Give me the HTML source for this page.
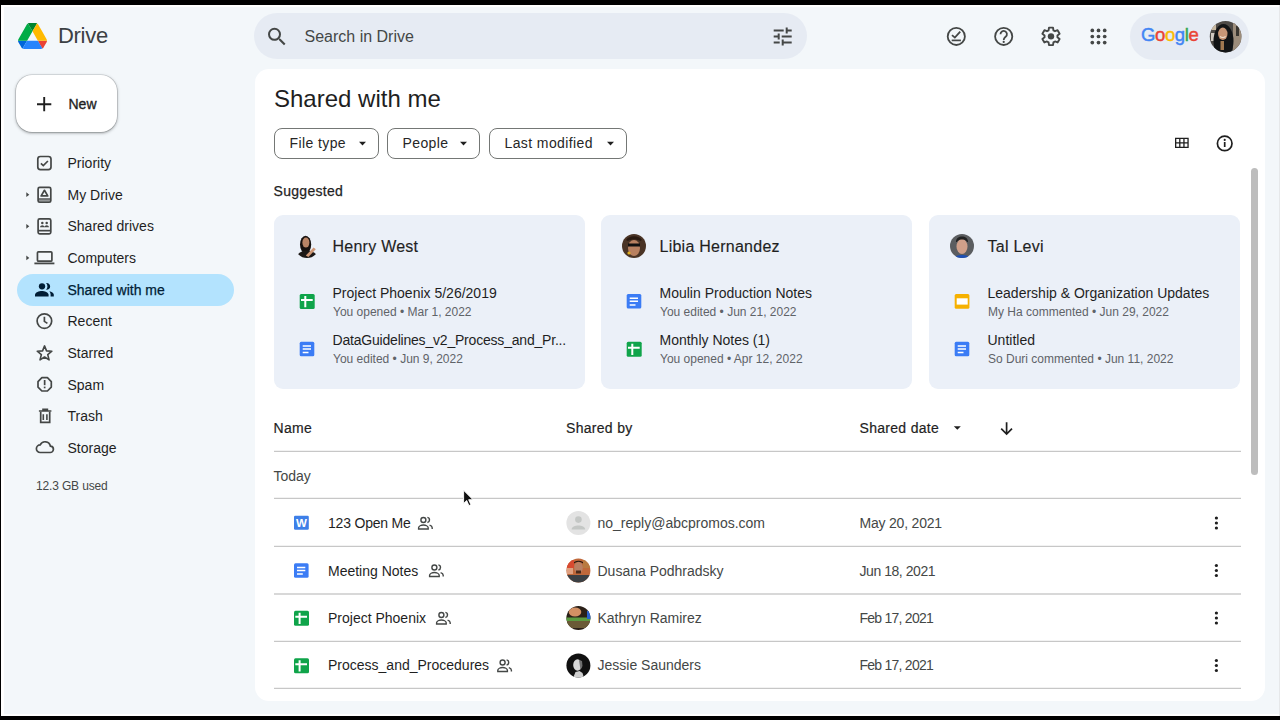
<!DOCTYPE html>
<html><head><meta charset="utf-8">
<style>
*{margin:0;padding:0;box-sizing:border-box}
html,body{width:1280px;height:720px;overflow:hidden;background:#000}
body{font-family:"Liberation Sans",sans-serif;color:#1f1f1f;position:relative}
.a{position:absolute}
.t{position:absolute;white-space:nowrap;line-height:1}
#ov{position:absolute;left:0;top:0}
</style></head><body>
<div class="a" style="left:1px;top:5px;width:1278px;height:711px;background:#f3f7fa"></div>
<div class="a" style="left:1px;top:5px;width:1278px;height:2px;background:#fff"></div>
<div class="a" style="left:1px;top:5px;width:3px;height:711px;background:#fff"></div>
<div class="a" style="left:1px;top:714px;width:1278px;height:2px;background:#fff"></div>
<div class="t" style="left:58px;top:25.00px;font-size:22px;color:#3c4043;letter-spacing:-0.3px">Drive</div>
<div class="a" style="left:254px;top:13px;width:553px;height:46px;background:#e6ebf3;border-radius:23px"></div>
<div class="t" style="left:304.5px;top:29.00px;font-size:16px;color:#444746;">Search in Drive</div>
<div class="a" style="left:1130px;top:13px;width:119px;height:47px;background:#e6ebf3;border-radius:24px"></div>
<div class="t" style="left:1141px;top:26.04px;font-size:18.5px;letter-spacing:-0.4px;-webkit-text-stroke:0.45px currentColor"><span style="color:#4285f4">G</span><span style="color:#ea4335">o</span><span style="color:#fbbc05">o</span><span style="color:#4285f4">g</span><span style="color:#34a853">l</span><span style="color:#ea4335">e</span></div>
<div class="a" style="left:16px;top:75px;width:101px;height:57px;background:#fff;border-radius:16px;box-shadow:0 0 0 0.6px rgba(60,64,67,.22),0 1px 2px rgba(60,64,67,.35),0 1px 3px 1px rgba(60,64,67,.18)"></div>
<div class="t" style="left:68.5px;top:97.00px;font-size:14px;color:#1f1f1f;-webkit-text-stroke:0.35px #1f1f1f">New</div>
<div class="a" style="left:17px;top:274px;width:217px;height:32px;background:#b3e3fe;border-radius:16px"></div>
<div class="t" style="left:67.5px;top:156.00px;font-size:14px;color:#1f1f1f;">Priority</div>
<div class="t" style="left:67.5px;top:188.00px;font-size:14px;color:#1f1f1f;">My Drive</div>
<div class="t" style="left:67.5px;top:219.00px;font-size:14px;color:#1f1f1f;">Shared drives</div>
<div class="t" style="left:67.5px;top:251.00px;font-size:14px;color:#1f1f1f;">Computers</div>
<div class="t" style="left:67.5px;top:283.00px;font-size:14px;color:#001d35;-webkit-text-stroke:0.25px #001d35">Shared with me</div>
<div class="t" style="left:67.5px;top:314.00px;font-size:14px;color:#1f1f1f;">Recent</div>
<div class="t" style="left:67.5px;top:346.00px;font-size:14px;color:#1f1f1f;">Starred</div>
<div class="t" style="left:67.5px;top:378.00px;font-size:14px;color:#1f1f1f;">Spam</div>
<div class="t" style="left:67.5px;top:409.00px;font-size:14px;color:#1f1f1f;">Trash</div>
<div class="t" style="left:67.5px;top:441.00px;font-size:14px;color:#1f1f1f;">Storage</div>
<div class="t" style="left:36px;top:480.00px;font-size:12px;color:#444746;letter-spacing:-0.15px">12.3 GB used</div>
<div class="a" style="left:255px;top:69px;width:1010px;height:632px;background:#fff;border-radius:14px"></div>
<div class="t" style="left:274px;top:87.00px;font-size:24px;color:#1f1f1f;">Shared with me</div>
<div class="a" style="left:274px;top:128px;width:105px;height:31px;border:1px solid #747775;border-radius:8px"></div>
<div class="t" style="left:289.5px;top:136.00px;font-size:14px;color:#262626;letter-spacing:0.4px">File type</div>
<div class="a" style="left:387px;top:128px;width:93px;height:31px;border:1px solid #747775;border-radius:8px"></div>
<div class="t" style="left:402.5px;top:136.00px;font-size:14px;color:#262626;letter-spacing:0.4px">People</div>
<div class="a" style="left:489px;top:128px;width:138px;height:31px;border:1px solid #747775;border-radius:8px"></div>
<div class="t" style="left:504.5px;top:136.00px;font-size:14px;color:#262626;letter-spacing:0.4px">Last modified</div>
<div class="t" style="left:273.5px;top:184.00px;font-size:14px;color:#1f1f1f;-webkit-text-stroke:0.25px #1f1f1f;letter-spacing:0.3px">Suggested</div>
<div class="a" style="left:1251px;top:168px;width:7px;height:307px;background:#bdbdbd;border-radius:4px"></div>
<div class="a" style="left:274px;top:215px;width:311px;height:174px;background:#ebf0f8;border-radius:9px"></div>
<div class="t" style="left:332.5px;top:239.00px;font-size:16px;color:#1f1f1f;-webkit-text-stroke:0.15px #1f1f1f;letter-spacing:0.25px">Henry West</div>
<div class="t" style="left:332.5px;top:286.00px;font-size:14px;color:#1f1f1f;">Project Phoenix 5/26/2019</div>
<div class="t" style="left:333px;top:306.00px;font-size:12px;color:#5f6368;">You opened • Mar 1, 2022</div>
<div class="t" style="left:332.5px;top:333.00px;font-size:14px;color:#1f1f1f;letter-spacing:-0.2px">DataGuidelines_v2_Process_and_Pr...</div>
<div class="t" style="left:333px;top:353.00px;font-size:12px;color:#5f6368;">You edited • Jun 9, 2022</div>
<div class="a" style="left:601px;top:215px;width:311px;height:174px;background:#ebf0f8;border-radius:9px"></div>
<div class="t" style="left:659.5px;top:239.00px;font-size:16px;color:#1f1f1f;-webkit-text-stroke:0.15px #1f1f1f;letter-spacing:0.25px">Libia Hernandez</div>
<div class="t" style="left:659.5px;top:286.00px;font-size:14px;color:#1f1f1f;">Moulin Production Notes</div>
<div class="t" style="left:660px;top:306.00px;font-size:12px;color:#5f6368;">You edited • Jun 21, 2022</div>
<div class="t" style="left:659.5px;top:333.00px;font-size:14px;color:#1f1f1f;">Monthly Notes (1)</div>
<div class="t" style="left:660px;top:353.00px;font-size:12px;color:#5f6368;">You opened • Apr 12, 2022</div>
<div class="a" style="left:929px;top:215px;width:311px;height:174px;background:#ebf0f8;border-radius:9px"></div>
<div class="t" style="left:987.5px;top:239.00px;font-size:16px;color:#1f1f1f;-webkit-text-stroke:0.15px #1f1f1f;letter-spacing:0.25px">Tal Levi</div>
<div class="t" style="left:987.5px;top:286.00px;font-size:14px;color:#1f1f1f;">Leadership &amp; Organization Updates</div>
<div class="t" style="left:988px;top:306.00px;font-size:12px;color:#5f6368;">My Ha commented • Jun 29, 2022</div>
<div class="t" style="left:987.5px;top:333.00px;font-size:14px;color:#1f1f1f;">Untitled</div>
<div class="t" style="left:988px;top:353.00px;font-size:12px;color:#5f6368;">So Duri commented • Jun 11, 2022</div>
<div class="t" style="left:273.5px;top:421.00px;font-size:14px;color:#1f1f1f;-webkit-text-stroke:0.2px #1f1f1f;letter-spacing:0.3px">Name</div>
<div class="t" style="left:566px;top:421.00px;font-size:14px;color:#1f1f1f;-webkit-text-stroke:0.2px #1f1f1f;letter-spacing:0.3px">Shared by</div>
<div class="t" style="left:859.5px;top:421.00px;font-size:14px;color:#1f1f1f;-webkit-text-stroke:0.2px #1f1f1f;letter-spacing:0.3px">Shared date</div>
<div class="a" style="left:274px;top:451px;width:967px;height:1px;background:#c7c7c7"></div>
<div class="a" style="left:274px;top:450px;width:967px;height:1px;background:#f2f2f2"></div>
<div class="a" style="left:274px;top:498px;width:967px;height:1px;background:#c7c7c7"></div>
<div class="a" style="left:274px;top:497px;width:967px;height:1px;background:#f2f2f2"></div>
<div class="a" style="left:274px;top:546px;width:967px;height:1px;background:#c7c7c7"></div>
<div class="a" style="left:274px;top:545px;width:967px;height:1px;background:#f2f2f2"></div>
<div class="a" style="left:274px;top:641px;width:967px;height:1px;background:#c7c7c7"></div>
<div class="a" style="left:274px;top:640px;width:967px;height:1px;background:#f2f2f2"></div>
<div class="a" style="left:274px;top:688px;width:967px;height:1px;background:#c7c7c7"></div>
<div class="a" style="left:274px;top:687px;width:967px;height:1px;background:#f2f2f2"></div>
<div class="a" style="left:274px;top:593px;width:967px;height:2px;background:#d8d8d8"></div>
<div class="t" style="left:273.5px;top:469.00px;font-size:14px;color:#444746;">Today</div>
<div class="t" style="left:328px;top:516.00px;font-size:14px;color:#1f1f1f;letter-spacing:-0.2px">123 Open Me</div>
<div class="t" style="left:597.5px;top:516.00px;font-size:14px;color:#444746;">no_reply@abcpromos.com</div>
<div class="t" style="left:859.5px;top:516.00px;font-size:14px;color:#444746;letter-spacing:-0.2px">May 20, 2021</div>
<div class="t" style="left:328px;top:564.00px;font-size:14px;color:#1f1f1f;">Meeting Notes</div>
<div class="t" style="left:597.5px;top:564.00px;font-size:14px;color:#444746;">Dusana Podhradsky</div>
<div class="t" style="left:859.5px;top:564.00px;font-size:14px;color:#444746;letter-spacing:-0.45px">Jun 18, 2021</div>
<div class="t" style="left:328px;top:611.00px;font-size:14px;color:#1f1f1f;">Project Phoenix</div>
<div class="t" style="left:597.5px;top:611.00px;font-size:14px;color:#444746;">Kathryn Ramirez</div>
<div class="t" style="left:859.5px;top:611.00px;font-size:14px;color:#444746;letter-spacing:-0.75px">Feb 17, 2021</div>
<div class="t" style="left:328px;top:658.00px;font-size:14px;color:#1f1f1f;">Process_and_Procedures</div>
<div class="t" style="left:597.5px;top:658.00px;font-size:14px;color:#444746;">Jessie Saunders</div>
<div class="t" style="left:859.5px;top:658.00px;font-size:14px;color:#444746;letter-spacing:-0.75px">Feb 17, 2021</div>
<div class="a" style="left:1279px;top:5px;width:1px;height:711px;background:#e6e8ea"></div>
<svg id="ov" width="1280" height="720" viewBox="0 0 1280 720">
<g transform="translate(18,23) scale(0.33219,0.33333)"><path d="m6.6 66.85 3.85 6.65c.8 1.4 1.95 2.5 3.3 3.3l13.75-23.8h-27.5c0 1.55.4 3.1 1.2 4.5z" fill="#0066da"/><path d="m43.65 25-13.75-23.8c-1.35.8-2.5 1.9-3.3 3.3l-25.4 44a9.06 9.06 0 0 0 -1.2 4.5h27.5z" fill="#00ac47"/><path d="m73.55 76.8c1.35-.8 2.5-1.9 3.3-3.3l1.6-2.75 7.65-13.25c.8-1.4 1.2-2.950 1.2-4.5h-27.502l5.852 11.5z" fill="#ea4335"/><path d="m43.65 25 13.75-23.8c-1.350-.8-2.9-1.2-4.5-1.2h-18.5c-1.6 0-3.15.45-4.5 1.2z" fill="#00832d"/><path d="m59.8 53h-32.3l-13.75 23.8c1.35.8 2.9 1.2 4.5 1.2h50.8c1.6 0 3.15-.45 4.5-1.2z" fill="#2684fc"/><path d="m73.4 26.5-12.7-22c-.8-1.4-1.95-2.5-3.3-3.3l-13.75 23.8 16.15 28h27.45c0-1.55-.4-3.1-1.2-4.5z" fill="#ffba00"/></g>
<g transform="translate(265,24.8)"><path fill="#444746" d="M15.5 14h-.79l-.28-.27A6.471 6.471 0 0 0 16 9.5 6.5 6.5 0 1 0 9.5 16c1.61 0 3.09-.59 4.23-1.57l.27.28v.79l5 4.99L20.49 19l-4.99-5zm-6 0C7.01 14 5 11.99 5 9.5S7.01 5 9.5 5 14 7.01 14 9.5 11.99 14 9.5 14z"/></g>
<g transform="translate(770.7,24.6)"><path fill="#444746" d="M3 17v2h6v-2H3zM3 5v2h10V5H3zm10 16v-2h8v-2h-8v-2h-2v6h2zM7 9v2H3v2h4v2h2V9H7zm14 4v-2H11v2h10zm-6-4h2V7h4V5h-4V3h-2v6z"/></g>
<circle cx="956.3" cy="36.4" r="8.6" fill="none" stroke="#444746" stroke-width="1.8"/><path d="M952 35.1l2.85 2.5 5.4-6" fill="none" stroke="#444746" stroke-width="1.8"/><path d="M951.7 40.4h9.2" stroke="#444746" stroke-width="1.7"/>
<circle cx="1003.7" cy="36.4" r="8.6" fill="none" stroke="#444746" stroke-width="1.8"/><path d="M1000.5 34.2a3.2 3.2 0 1 1 5.3 2.4c-1.2 1-2.1 1.6-2.1 3.5" fill="none" stroke="#444746" stroke-width="1.8"/><circle cx="1003.7" cy="41.9" r="1.1" fill="#444746"/>
<path d="M1048.57 30.32 L1048.98 27.58 L1053.02 27.58 L1053.43 30.32 L1055.00 31.23 L1057.58 30.21 L1059.61 33.72 L1057.44 35.45 L1057.44 37.25 L1059.61 38.98 L1057.58 42.49 L1055.00 41.47 L1053.43 42.38 L1053.02 45.12 L1048.98 45.12 L1048.57 42.38 L1047.00 41.47 L1044.42 42.49 L1042.39 38.98 L1044.56 37.25 L1044.56 35.45 L1042.39 33.72 L1044.42 30.21 L1047.00 31.23Z" fill="none" stroke="#444746" stroke-width="1.9" stroke-linejoin="round"/><circle cx="1051" cy="36.35" r="3.2" fill="#444746"/>
<circle cx="1092.3" cy="30.4" r="1.85" fill="#444746"/>
<circle cx="1098.5" cy="30.4" r="1.85" fill="#444746"/>
<circle cx="1104.7" cy="30.4" r="1.85" fill="#444746"/>
<circle cx="1092.3" cy="36.5" r="1.85" fill="#444746"/>
<circle cx="1098.5" cy="36.5" r="1.85" fill="#444746"/>
<circle cx="1104.7" cy="36.5" r="1.85" fill="#444746"/>
<circle cx="1092.3" cy="42.6" r="1.85" fill="#444746"/>
<circle cx="1098.5" cy="42.6" r="1.85" fill="#444746"/>
<circle cx="1104.7" cy="42.6" r="1.85" fill="#444746"/>
<defs><clipPath id="ca"><circle cx="1225.6" cy="36.7" r="15.8"/></clipPath><clipPath id="c1"><circle cx="307" cy="246" r="12"/></clipPath><clipPath id="c2"><circle cx="634" cy="246" r="12"/></clipPath><clipPath id="c3"><circle cx="962" cy="246" r="12"/></clipPath><clipPath id="r1"><circle cx="578.4" cy="570.5" r="12"/></clipPath><clipPath id="r2"><circle cx="578.4" cy="618" r="12"/></clipPath><clipPath id="r3"><circle cx="578.4" cy="665.5" r="12"/></clipPath></defs>
<g clip-path="url(#ca)"><rect x="1208" y="19" width="36" height="36" fill="#4e4a46"/><rect x="1233" y="19" width="12" height="36" fill="#9c8c7a"/><rect x="1236" y="26" width="3" height="10" fill="#3a3630"/><rect x="1210" y="25" width="6" height="5" fill="#c8b8a0"/><rect x="1211" y="33" width="4" height="8" fill="#d0c8c0"/><ellipse cx="1223.5" cy="41" rx="10" ry="17" fill="#121416"/><ellipse cx="1222.8" cy="33.8" rx="4.7" ry="6.2" fill="#c89676"/><path d="M1220 36.5q2.8 2 5.6 0" stroke="#f0e0d0" stroke-width="1.2" fill="none"/><rect x="1220.5" y="41" width="3.5" height="9" fill="#a07850"/></g>
<path d="M44.2 97v14.3M37 104.2h14.3" stroke="#1f1f1f" stroke-width="1.9"/>
<rect x="37.8" y="156.5" width="13.2" height="13.2" rx="2.6" stroke="#444746" stroke-width="1.7" fill="none"/><path d="M40.9 163.3l2.4 2.3 4.6-4.6" stroke="#444746" stroke-width="1.7" fill="none"/>
<rect x="38.1" y="187.35" width="12.7" height="14.9" rx="1.6" stroke="#444746" stroke-width="1.7" fill="none"/><rect x="38.5" y="198.3" width="12" height="1.4" fill="#444746"/><rect x="38.5" y="199.7" width="12" height="2.2" fill="#444746" opacity=".55"/><path d="M44.45 190.3l3.3 5.6h-6.6z" stroke="#444746" stroke-width="1.7" fill="none" stroke-linejoin="round"/>
<rect x="38.1" y="218.85" width="12.7" height="15" rx="1.6" stroke="#444746" stroke-width="1.7" fill="none"/><rect x="38" y="229.8" width="13" height="1.7" fill="#444746"/><circle cx="42.3" cy="222.9" r="1.25" fill="#444746"/><circle cx="46.7" cy="222.9" r="1.25" fill="#444746"/><path d="M40 227.3c0-1.3 1.3-2 2.3-2s2.3.7 2.3 2zM44.4 227.3c0-1.3 1.3-2 2.3-2s2.3.7 2.3 2z" fill="#444746"/>
<rect x="37.45" y="251.85" width="14.45" height="9.3" rx="1" stroke="#444746" stroke-width="1.7" fill="none"/><rect x="34.4" y="262.5" width="20" height="1.8" fill="#444746"/>
<path d="M26.3 192.3l3 2.4-3 2.4z" fill="#444746"/>
<path d="M26.3 223.9l3 2.4-3 2.4z" fill="#444746"/>
<path d="M26.3 255.5l3 2.4-3 2.4z" fill="#444746"/>
<g fill="#001d35"><circle cx="42" cy="286.3" r="3.15"/><path d="M46.1 283.1a3.35 3.35 0 1 1 0 6.55a4.7 4.7 0 0 0 0-6.55z"/><path d="M35 296.4v-1.7c0-2.3 4.2-3.7 6.8-3.7s6.8 1.4 6.8 3.7v1.7z"/><path d="M49.3 291.2c2.4.5 4.5 1.7 4.5 3.4v1.8h-3.2v-1.8c0-1.4-.5-2.5-1.3-3.4z"/></g>
<circle cx="44.4" cy="321.1" r="7.3" stroke="#444746" stroke-width="1.7" fill="none"/><path d="M44.4 316.8v4.6l3 2" stroke="#444746" stroke-width="1.7" fill="none"/>
<path d="M44.55 345.90 L46.52 350.89 L51.87 351.22 L47.74 354.64 L49.08 359.83 L44.55 356.95 L40.02 359.83 L41.36 354.64 L37.23 351.22 L42.58 350.89Z" stroke="#444746" stroke-width="1.6" fill="none" stroke-linejoin="round"/>
<path d="M51.30 387.11 L47.41 391.00 L41.89 391.00 L38.00 387.11 L38.00 381.59 L41.89 377.70 L47.41 377.70 L51.30 381.59Z" stroke="#444746" stroke-width="1.7" fill="none" stroke-linejoin="round"/><rect x="43.8" y="380" width="1.7" height="5.2" fill="#444746"/><rect x="43.8" y="386.6" width="1.7" height="1.7" fill="#444746"/>
<path d="M40.7 411.8v10.6h9v-10.6" stroke="#444746" stroke-width="1.7" fill="none"/><path d="M38.9 411h12.5M42.2 409.4h6" stroke="#444746" stroke-width="1.7"/><path d="M43.3 414.2v5.8M46.9 414.2v5.8" stroke="#444746" stroke-width="1.6"/>
<path d="M40.2 452.5h9.8a3.2 3.2 0 0 0 .4-6.4a5.4 5.4 0 0 0-10.2-1.2a3.8 3.8 0 0 0 0 7.6z" stroke="#444746" stroke-width="1.7" fill="none"/>
<path d="M359.0 141.8h7l-3.5 3.6z" fill="#1f1f1f"/>
<path d="M460.0 141.8h7l-3.5 3.6z" fill="#1f1f1f"/>
<path d="M607.0 141.8h7l-3.5 3.6z" fill="#1f1f1f"/>
<path fill="#1f1f1f" fill-rule="evenodd" d="M1175 137.7h13.7v10.3H1175z M1176.3 139v3.2h2.85v-3.2z M1180.45 139v3.2h2.85v-3.2z M1184.6 139v3.2h2.8v-3.2z M1176.3 143.5v3.2h2.85v-3.2z M1180.45 143.5v3.2h2.85v-3.2z M1184.6 143.5v3.2h2.8v-3.2z"/>
<circle cx="1224.7" cy="143.4" r="7.3" fill="none" stroke="#1f1f1f" stroke-width="1.7"/><rect x="1223.85" y="142" width="1.7" height="5" fill="#1f1f1f"/><circle cx="1224.7" cy="139.9" r="1.05" fill="#1f1f1f"/>
<rect x="299.7" y="294.0" width="15" height="15" rx="1.5" fill="#0fa44a"/><path d="M301.0 300.0h11.7M305.3 296.0v11.3" stroke="#fff" stroke-width="2"/>
<rect x="299.7" y="341.7" width="14.6" height="14.6" rx="1.5" fill="#3b7cf5"/><path d="M302.7 345.95h8.3M302.7 349.05h8.3M302.7 352.59999999999997h5.8" stroke="#fff" stroke-width="1.5"/>
<rect x="626.7" y="294.0" width="14.6" height="14.6" rx="1.5" fill="#3b7cf5"/><path d="M629.7 298.25h8.3M629.7 301.35h8.3M629.7 304.9h5.8" stroke="#fff" stroke-width="1.5"/>
<rect x="626.7" y="341.7" width="15" height="15" rx="1.5" fill="#0fa44a"/><path d="M628.0 347.7h11.7M632.3000000000001 343.7v11.3" stroke="#fff" stroke-width="2"/>
<rect x="954.7" y="294.0" width="14.7" height="14.7" rx="1.5" fill="#f6b100"/><rect x="956.7" y="298.3" width="11" height="6.3" fill="#fff"/>
<rect x="954.7" y="341.7" width="14.6" height="14.6" rx="1.5" fill="#3b7cf5"/><path d="M957.7 345.95h8.3M957.7 349.05h8.3M957.7 352.59999999999997h5.8" stroke="#fff" stroke-width="1.5"/>
<g clip-path="url(#c1)"><ellipse cx="305.6" cy="244.5" rx="5.6" ry="8.8" fill="#17110f"/><ellipse cx="305.9" cy="242.6" rx="3.5" ry="5" fill="#b98466"/><ellipse cx="307" cy="258.5" rx="10.5" ry="8" fill="#1c1816"/><path d="M313.6 247.6l2.2 1.6-7.4 7.8-2.6-1.6z" fill="#cf9876"/></g>
<g clip-path="url(#c2)"><rect x="620" y="232" width="28" height="28" fill="#4a3426"/><ellipse cx="634" cy="248" rx="6" ry="8" fill="#b88060"/><rect x="628" y="243.5" width="12" height="3" fill="#111"/><path d="M626 240c3-5 13-5 16 0l-2 1c-3-2-9-2-12 0z" fill="#2a1a10"/><circle cx="629" cy="253" r="1.6" fill="#e0b020"/></g>
<g clip-path="url(#c3)"><rect x="948" y="232" width="28" height="28" fill="#5b5d60"/><ellipse cx="962" cy="246.5" rx="5.5" ry="7.5" fill="#d1a08a"/><path d="M956 242c0-4 3-5.5 6-5.5s6 1.5 6 5.5l-1 0c-1-2-3-2.5-5-2.5s-4 .5-5 2.5z" fill="#222"/><ellipse cx="962" cy="259" rx="9" ry="4" fill="#1e4fb5"/></g>
<path d="M953.8 426.2h7l-3.5 3.6z" fill="#1f1f1f"/>
<path d="M1006.6 422.3v11.5M1001.2 428.6l5.4 5.4 5.4-5.4" fill="none" stroke="#1f1f1f" stroke-width="1.7"/>
<rect x="294" y="515.7" width="14.8" height="14" rx="1.2" fill="#3d7fe8"/><text x="301.4" y="527.0" text-anchor="middle" font-family="Liberation Sans" font-size="11.5" font-weight="700" fill="#fff">W</text>
<g fill="none" stroke="#444746" stroke-width="1.4"><circle cx="423.40000000000003" cy="520.0" r="2.5"/><path d="M418.6 529.0v-1.2c0-1.7 2.6-2.8 4.8-2.8s4.8 1.1 4.8 2.8v1.2z"/><path d="M427.40000000000003 517.4a2.6 2.6 0 0 1 0 5.1M429.6 525.2c1.5.5 2.6 1.3 2.6 2.6v1.2"/></g>
<circle cx="1216.4" cy="518.0" r="1.6" fill="#1f1f1f"/><circle cx="1216.4" cy="523.0" r="1.6" fill="#1f1f1f"/><circle cx="1216.4" cy="528.0" r="1.6" fill="#1f1f1f"/>
<rect x="294" y="563.2" width="14.6" height="14.6" rx="1.5" fill="#3b7cf5"/><path d="M297 567.45h8.3M297 570.5500000000001h8.3M297 574.1h5.8" stroke="#fff" stroke-width="1.5"/>
<g fill="none" stroke="#444746" stroke-width="1.4"><circle cx="434.40000000000003" cy="567.5" r="2.5"/><path d="M429.6 576.5v-1.2c0-1.7 2.6-2.8 4.8-2.8s4.8 1.1 4.8 2.8v1.2z"/><path d="M438.40000000000003 564.9a2.6 2.6 0 0 1 0 5.1M440.6 572.7c1.5.5 2.6 1.3 2.6 2.6v1.2"/></g>
<circle cx="1216.4" cy="565.5" r="1.6" fill="#1f1f1f"/><circle cx="1216.4" cy="570.5" r="1.6" fill="#1f1f1f"/><circle cx="1216.4" cy="575.5" r="1.6" fill="#1f1f1f"/>
<rect x="294" y="610.7" width="15" height="15" rx="1.5" fill="#0fa44a"/><path d="M295.3 616.7h11.7M299.6 612.7v11.3" stroke="#fff" stroke-width="2"/>
<g fill="none" stroke="#444746" stroke-width="1.4"><circle cx="441.40000000000003" cy="615.0" r="2.5"/><path d="M436.6 624.0v-1.2c0-1.7 2.6-2.8 4.8-2.8s4.8 1.1 4.8 2.8v1.2z"/><path d="M445.40000000000003 612.4a2.6 2.6 0 0 1 0 5.1M447.6 620.2c1.5.5 2.6 1.3 2.6 2.6v1.2"/></g>
<circle cx="1216.4" cy="613.0" r="1.6" fill="#1f1f1f"/><circle cx="1216.4" cy="618.0" r="1.6" fill="#1f1f1f"/><circle cx="1216.4" cy="623.0" r="1.6" fill="#1f1f1f"/>
<rect x="294" y="658.2" width="15" height="15" rx="1.5" fill="#0fa44a"/><path d="M295.3 664.2h11.7M299.6 660.2v11.3" stroke="#fff" stroke-width="2"/>
<g fill="none" stroke="#444746" stroke-width="1.4"><circle cx="502.6" cy="662.5" r="2.5"/><path d="M497.8 671.5v-1.2c0-1.7 2.6-2.8 4.8-2.8s4.8 1.1 4.8 2.8v1.2z"/><path d="M506.6 659.9a2.6 2.6 0 0 1 0 5.1M508.8 667.7c1.5.5 2.6 1.3 2.6 2.6v1.2"/></g>
<circle cx="1216.4" cy="660.5" r="1.6" fill="#1f1f1f"/><circle cx="1216.4" cy="665.5" r="1.6" fill="#1f1f1f"/><circle cx="1216.4" cy="670.5" r="1.6" fill="#1f1f1f"/>
<circle cx="578.4" cy="523" r="12" fill="#e3e3e3"/><circle cx="578.4" cy="519.6" r="3.3" fill="#c4c7c5"/><path d="M571.6 529.6c0-2.6 3.6-4 6.8-4s6.8 1.4 6.8 4z" fill="#c4c7c5"/>
<g clip-path="url(#r1)"><rect x="566" y="558" width="25" height="25" fill="#c0683a"/><rect x="567" y="560" width="7" height="8" fill="#d84a30"/><rect x="583" y="560" width="7" height="8" fill="#b87a40"/><rect x="567" y="568" width="6" height="6" fill="#e0a080"/><ellipse cx="578.5" cy="567.5" rx="4.3" ry="5.6" fill="#b98064"/><path d="M574 563.5q4.5-3.5 9 0v-1.5q-4.5-2.5-9 0z" fill="#2a1a14"/><rect x="576" y="570.5" width="5" height="3" fill="#4a2a1a"/><rect x="566" y="575" width="25" height="8" fill="#3c4044"/></g>
<g clip-path="url(#r2)"><rect x="566" y="605" width="25" height="25" fill="#2a2018"/><ellipse cx="575" cy="612" rx="6.3" ry="4.5" fill="#d29064"/><rect x="566" y="617.5" width="25" height="3.5" fill="#5a9a40"/><rect x="566" y="621" width="25" height="7" fill="#6a5a36"/><rect x="587" y="611" width="4" height="8" fill="#2a62d0"/></g>
<g clip-path="url(#r3)"><rect x="566" y="653" width="25" height="25" fill="#101010"/><ellipse cx="577.5" cy="665" rx="4.3" ry="5.8" fill="#d8d8d8"/><path d="M579 660l3 1 .5 5-2 4z" fill="#707070"/><path d="M573 678l2.5-6 4-1 3 2 1.5 5z" fill="#cfcfcf"/></g>
<path d="M463.6 490.3v13.2l3.1-3 2.2 5.1 2-.9-2.2-5h4.3z" fill="#111" stroke="#fff" stroke-width="0.9"/>
</svg>
</body></html>
